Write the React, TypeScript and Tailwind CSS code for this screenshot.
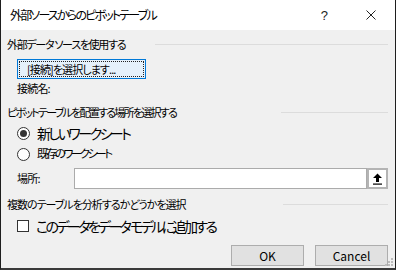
import React from "react";

const jp = "font-['Noto_Sans_CJK_JP','Noto_Sans',sans-serif] [font-feature-settings:'palt']";

const GroupHeader = ({ label, line, track }: { label: string; line: string; track: string }) => (
  <div className="flex h-[16px] items-center justify-between">
    <span className={`text-[11px] leading-none text-black ${track}`}>{label}</span>
    <div className={`h-px bg-[#dcdcdc] ${line}`} />
  </div>
);

const Radio = ({ checked }: { checked?: boolean }) => (
  <span className="flex h-[13px] w-[13px] items-center justify-center rounded-full border border-[#333] bg-white">
    {checked && <span className="h-[7px] w-[7px] rounded-full bg-[#333]" />}
  </span>
);

export default function App() {
  return (
    <div className={`h-[271px] w-[397px] bg-white ${jp}`}>
      <div className="flex h-[270px] w-[396px] flex-col border-x border-b-2 border-x-[#1e1e1e] border-b-[#3a3a3a]">
        {/* title bar */}
        <div className="flex h-[30px] shrink-0 items-center bg-white pl-[9px]">
          <span className="text-[12px] leading-none tracking-[-1.8px] text-black">外部ソースからのピボットテーブル</span>
          <span className="ml-auto text-[13px] leading-none text-[#222] font-['Liberation_Sans',sans-serif]">?</span>
          <svg className="ml-[38px] mr-[19px]" width="10" height="10" viewBox="0 0 10 10">
            <path d="M0.5 0.5L9.5 9.5M9.5 0.5L0.5 9.5" stroke="#222" strokeWidth="1" />
          </svg>
        </div>

        {/* body */}
        <div className="relative flex flex-1 flex-col bg-[#f0f0f0] pl-[6px] pr-[7px] pt-[6px]">
          <GroupHeader label="外部データ ソースを使用する" line="w-[233px]" track="tracking-[-1.3px]" />

          <button className="ml-[10px] mt-[7px] flex h-[20px] w-[129px] items-center border border-[#0078d7] bg-[#e5f1fb] p-[1px]">
            <span className="flex h-full w-full items-center border border-dotted border-[#222] pl-[7px] text-[11px] leading-none tracking-[-0.9px] text-black">
              [接続]を選択します...
            </span>
          </button>

          <div className="ml-[10px] mt-[1px] flex h-[16px] items-center text-[11px] leading-none tracking-[-0.8px] text-black">接続名:</div>

          <div className="mt-[8px]">
            <GroupHeader label="ピボットテーブルを配置する場所を選択する" line="w-[107px]" track="tracking-[-1.75px]" />
          </div>

          <label className="ml-[10px] mt-[5px] flex h-[16px] items-center gap-[7px]">
            <Radio checked />
            <span className="text-[14px] leading-none tracking-[-2.55px] text-black">新しいワークシート</span>
          </label>
          <label className="ml-[10px] mt-[5px] flex h-[16px] items-center gap-[7px]">
            <Radio />
            <span className="text-[11.5px] leading-none tracking-[-2.6px] text-black">既存のワークシート</span>
          </label>

          <div className="ml-[10px] mt-[6px] flex h-[21px] items-center">
            <span className="w-[57px] text-[11px] leading-none tracking-[-0.8px] text-black">場所:</span>
            <div className="h-full flex-1 border border-[#ababab] bg-white" />
            <div className="flex h-full w-[21px] items-center justify-center border-2 border-[#b4b4b4] bg-white">
              <svg width="11" height="12" viewBox="0 0 11 12">
                <path d="M5.5 0.5L10 5H7V9H4V5H1Z" fill="#000" />
                <rect x="1" y="10.5" width="9" height="1.2" fill="#000" />
              </svg>
            </div>
          </div>

          <div className="mt-[7px]">
            <GroupHeader label="複数のテーブルを分析するかどうかを選択" line="w-[105px]" track="tracking-[-1px]" />
          </div>

          <label className="ml-[10px] mt-[5px] flex h-[18px] items-center gap-[7px]">
            <span className="h-[12px] w-[12px] border border-[#333] bg-white" />
            <span className="text-[14px] leading-none tracking-[-2.6px] text-black">このデータをデータ モデルに追加する</span>
          </label>

          <div className="mt-[10px] flex justify-end gap-[11px]">
            <button className="flex h-[21px] w-[73px] items-center justify-center border border-[#adadad] bg-[#e1e1e1] text-[12px] leading-none text-black">OK</button>
            <button className="flex h-[21px] w-[73px] items-center justify-center border border-[#adadad] bg-[#e1e1e1] text-[12px] leading-none text-black">Cancel</button>
          </div>

          {/* resize grip */}
          <svg className="absolute bottom-[1px] right-[1px]" width="9" height="9" viewBox="0 0 9 9">
            <rect x="6" y="0" width="2" height="2" fill="#bcbcbc" />
            <rect x="3" y="3" width="2" height="2" fill="#bcbcbc" />
            <rect x="6" y="3" width="2" height="2" fill="#bcbcbc" />
            <rect x="0" y="6" width="2" height="2" fill="#bcbcbc" />
            <rect x="3" y="6" width="2" height="2" fill="#bcbcbc" />
            <rect x="6" y="6" width="2" height="2" fill="#bcbcbc" />
          </svg>
        </div>
      </div>
    </div>
  );
}
